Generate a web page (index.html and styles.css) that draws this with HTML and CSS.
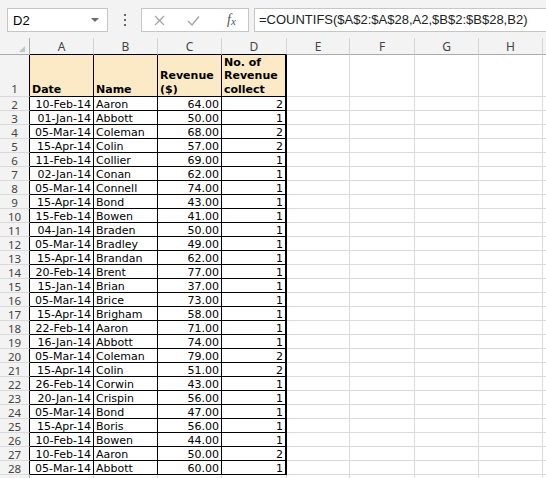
FILE: index.html
```html
<!DOCTYPE html>
<html>
<head>
<meta charset="utf-8">
<link rel="stylesheet" href="styles.css">
</head>
<body>
<div class="bar">
  <div class="namebox"><span>D2</span><span class="caret"></span></div>
  <div class="dots"><span></span><span></span><span></span></div>
  <div class="fxbox">
    <svg class="ico x" width="11" height="11" viewBox="0 0 11 11"><path d="M1 1 L10 10 M10 1 L1 10" stroke="#a6a6a6" stroke-width="1.3" fill="none"/></svg>
    <svg class="ico ck" width="13" height="11" viewBox="0 0 13 11"><path d="M1 6 L5 10 L12 1.5" stroke="#a6a6a6" stroke-width="1.4" fill="none"/></svg>
    <span class="fx"><i>f</i><i class="sx">x</i></span>
  </div>
  <div class="formula">=COUNTIFS($A$2:$A$28,A2,$B$2:$B$28,B2)</div>
</div>
<div class="sheet">
  <div class="row hdr"><div class="corner"><svg width="6" height="6" viewBox="0 0 6 6"><polygon points="6,0 6,6 0,6" fill="#c4c4c4"/></svg></div><div>A</div><div>B</div><div>C</div><div>D</div><div>E</div><div>F</div><div>G</div><div>H</div><div></div></div>
  <div class="row d first"><div class="rh">1</div><div>Date</div><div>Name</div><div>Revenue ($)</div><div>No. of Revenue collect</div><div></div><div></div><div></div><div></div><div></div></div>
  <div class="row d"><div class="rh">2</div><div>10-Feb-14</div><div>Aaron</div><div>64.00</div><div>2</div><div></div><div></div><div></div><div></div><div></div></div>
  <div class="row d"><div class="rh">3</div><div>01-Jan-14</div><div>Abbott</div><div>50.00</div><div>1</div><div></div><div></div><div></div><div></div><div></div></div>
  <div class="row d"><div class="rh">4</div><div>05-Mar-14</div><div>Coleman</div><div>68.00</div><div>2</div><div></div><div></div><div></div><div></div><div></div></div>
  <div class="row d"><div class="rh">5</div><div>15-Apr-14</div><div>Colin</div><div>57.00</div><div>2</div><div></div><div></div><div></div><div></div><div></div></div>
  <div class="row d"><div class="rh">6</div><div>11-Feb-14</div><div>Collier</div><div>69.00</div><div>1</div><div></div><div></div><div></div><div></div><div></div></div>
  <div class="row d"><div class="rh">7</div><div>02-Jan-14</div><div>Conan</div><div>62.00</div><div>1</div><div></div><div></div><div></div><div></div><div></div></div>
  <div class="row d"><div class="rh">8</div><div>05-Mar-14</div><div>Connell</div><div>74.00</div><div>1</div><div></div><div></div><div></div><div></div><div></div></div>
  <div class="row d"><div class="rh">9</div><div>15-Apr-14</div><div>Bond</div><div>43.00</div><div>1</div><div></div><div></div><div></div><div></div><div></div></div>
  <div class="row d"><div class="rh">10</div><div>15-Feb-14</div><div>Bowen</div><div>41.00</div><div>1</div><div></div><div></div><div></div><div></div><div></div></div>
  <div class="row d"><div class="rh">11</div><div>04-Jan-14</div><div>Braden</div><div>50.00</div><div>1</div><div></div><div></div><div></div><div></div><div></div></div>
  <div class="row d"><div class="rh">12</div><div>05-Mar-14</div><div>Bradley</div><div>49.00</div><div>1</div><div></div><div></div><div></div><div></div><div></div></div>
  <div class="row d"><div class="rh">13</div><div>15-Apr-14</div><div>Brandan</div><div>62.00</div><div>1</div><div></div><div></div><div></div><div></div><div></div></div>
  <div class="row d"><div class="rh">14</div><div>20-Feb-14</div><div>Brent</div><div>77.00</div><div>1</div><div></div><div></div><div></div><div></div><div></div></div>
  <div class="row d"><div class="rh">15</div><div>15-Jan-14</div><div>Brian</div><div>37.00</div><div>1</div><div></div><div></div><div></div><div></div><div></div></div>
  <div class="row d"><div class="rh">16</div><div>05-Mar-14</div><div>Brice</div><div>73.00</div><div>1</div><div></div><div></div><div></div><div></div><div></div></div>
  <div class="row d"><div class="rh">17</div><div>15-Apr-14</div><div>Brigham</div><div>58.00</div><div>1</div><div></div><div></div><div></div><div></div><div></div></div>
  <div class="row d"><div class="rh">18</div><div>22-Feb-14</div><div>Aaron</div><div>71.00</div><div>1</div><div></div><div></div><div></div><div></div><div></div></div>
  <div class="row d"><div class="rh">19</div><div>16-Jan-14</div><div>Abbott</div><div>74.00</div><div>1</div><div></div><div></div><div></div><div></div><div></div></div>
  <div class="row d"><div class="rh">20</div><div>05-Mar-14</div><div>Coleman</div><div>79.00</div><div>2</div><div></div><div></div><div></div><div></div><div></div></div>
  <div class="row d"><div class="rh">21</div><div>15-Apr-14</div><div>Colin</div><div>51.00</div><div>2</div><div></div><div></div><div></div><div></div><div></div></div>
  <div class="row d"><div class="rh">22</div><div>26-Feb-14</div><div>Corwin</div><div>43.00</div><div>1</div><div></div><div></div><div></div><div></div><div></div></div>
  <div class="row d"><div class="rh">23</div><div>20-Jan-14</div><div>Crispin</div><div>56.00</div><div>1</div><div></div><div></div><div></div><div></div><div></div></div>
  <div class="row d"><div class="rh">24</div><div>05-Mar-14</div><div>Bond</div><div>47.00</div><div>1</div><div></div><div></div><div></div><div></div><div></div></div>
  <div class="row d"><div class="rh">25</div><div>15-Apr-14</div><div>Boris</div><div>56.00</div><div>1</div><div></div><div></div><div></div><div></div><div></div></div>
  <div class="row d"><div class="rh">26</div><div>10-Feb-14</div><div>Bowen</div><div>44.00</div><div>1</div><div></div><div></div><div></div><div></div><div></div></div>
  <div class="row d"><div class="rh">27</div><div>10-Feb-14</div><div>Aaron</div><div>50.00</div><div>2</div><div></div><div></div><div></div><div></div><div></div></div>
  <div class="row d"><div class="rh">28</div><div>05-Mar-14</div><div>Abbott</div><div>60.00</div><div>1</div><div></div><div></div><div></div><div></div><div></div></div>
  <div class="row"><div class="rh"></div><div></div><div></div><div></div><div></div><div></div><div></div><div></div><div></div><div></div></div>
</div>
</body>
</html>
```
FILE: styles.css
```css
* { box-sizing: border-box; }
html, body { margin: 0; padding: 0; }
body {
  width: 546px;
  height: 478px;
  overflow: hidden;
  background: #ffffff;
  font-family: "DejaVu Sans", Verdana, sans-serif;
  color: #000;
}
.bar {
  height: 38px;
  background: #f3f3f3;
  display: flex;
  align-items: flex-start;
  padding: 8px 0 0 7px;
  font-family: "Liberation Sans", Arial, sans-serif;
  font-size: 13px;
}
.namebox {
  width: 101px;
  height: 24px;
  background: #fff;
  border: 1px solid #c6c6c6;
  display: flex;
  align-items: center;
  justify-content: space-between;
  padding: 0 8px 0 5px;
}
.caret {
  width: 0;
  height: 0;
  border-left: 4px solid transparent;
  border-right: 4px solid transparent;
  border-top: 4px solid #6a6a6a;
}
.dots {
  width: 33px;
  height: 24px;
  display: flex;
  flex-direction: column;
  align-items: center;
  justify-content: center;
  gap: 3px;
}
.dots span {
  width: 2px;
  height: 2px;
  background: #6a6a6a;
}
.fxbox {
  width: 108px;
  height: 24px;
  background: #fff;
  border: 1px solid #c6c6c6;
  display: flex;
  align-items: center;
  padding-left: 12px;
}
.ck { margin-left: 22px; }
.fx {
  margin-left: 27px;
  font-family: "Liberation Serif", "Times New Roman", serif;
  font-size: 14px;
  color: #555;
}
.fx .sx { font-size: 11px; position: relative; top: 1px; }
.formula {
  flex: 1;
  margin-left: 5px;
  height: 24px;
  background: #fff;
  border: 1px solid #c6c6c6;
  border-right: none;
  padding-left: 4px;
  line-height: 22px;
  white-space: nowrap;
  color: #222;
}
.sheet { width: 546px; }
.row {
  display: grid;
  grid-template-columns: 30px 64px 64px 64px 65px 63px 65px 64px 64px 30px;
  height: 14px;
}
.row > div {
  border-right: 1px solid #dadada;
  border-bottom: 1px solid #dadada;
  font-size: 11px;
  line-height: 13px;
  padding: 1px 2px 0;
  white-space: nowrap;
  overflow: hidden;
}
.row > .rh {
  background: #f3f3f3;
  text-align: center;
  font-family: "Noto Sans", "Open Sans", sans-serif;
  font-size: 11.5px;
  color: #444;
  border-right-color: #ababab;
  border-bottom-color: #dadada;
}
.hdr { height: 17px; }
.hdr > div {
  background: #f3f3f3;
  text-align: center;
  font-family: "Noto Sans", "Open Sans", sans-serif;
  font-size: 12px;
  line-height: 16px;
  padding-top: 1px;
  color: #444;
  border-bottom-color: #ababab;
  border-right-color: #d4d4d4;
}
.hdr > div:nth-child(n+2):nth-child(-n+5) { border-bottom-color: #000; }
.hdr > .corner {
  display: flex;
  justify-content: flex-end;
  align-items: flex-end;
  padding: 0 4px 2px 0;
  border-right-color: #ababab;
}
.d > .rh { border-right-color: #000; }
.d > div:nth-child(n+2):nth-child(-n+5) {
  border-right-color: #000;
  border-bottom-color: #000;
}
.d > div:nth-child(5) { border-right: 2px solid #000; }
.d > div:nth-child(2),
.d > div:nth-child(4),
.d > div:nth-child(5) { text-align: right; }
.first { height: 42px; }
.first > div {
  display: flex;
  flex-direction: column;
  justify-content: flex-end;
  line-height: 13.5px;
  padding-top: 0;
}
.first > div:nth-child(n+2):nth-child(-n+5) {
  background: #fce9c6;
  font-weight: bold;
  white-space: normal;
  text-align: left;
}
.first > .rh { line-height: 14px; }
```
